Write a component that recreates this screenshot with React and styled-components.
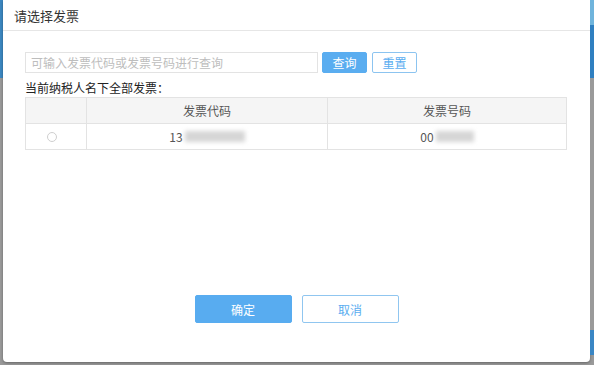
import React from "react";
import styled, { createGlobalStyle } from "styled-components";

const Global = createGlobalStyle`
  html, body { margin: 0; padding: 0; background: #8f8f8f; }
  body { font-family: "Noto Sans CJK SC", "Noto Sans", sans-serif; }
  * { box-sizing: border-box; }
`;

const Page = styled.div`
  width: 594px;
  height: 365px;
  display: flex;
  overflow: hidden;
  background: #9a9a9a;
`;

const Strip = styled.div`
  width: ${(p) => p.$w}px;
  display: flex;
  flex-direction: column;
  flex-shrink: 0;
`;

const Block = styled.div`
  height: ${(p) => p.$h}px;
  background: ${(p) => p.$c};
  flex-shrink: 0;
`;

const Dialog = styled.div`
  width: 587px;
  height: 362px;
  background: #fff;
  border-radius: 0 0 4px 4px;
  box-shadow: 0 1px 3px rgba(0, 0, 0, 0.35);
  display: flex;
  flex-direction: column;
  flex-shrink: 0;
`;

const Header = styled.div`
  height: 31px;
  border-bottom: 1px solid #e6e6e6;
  display: flex;
  align-items: center;
  padding-left: 11px;
  font-size: 13px;
  color: #333;
`;

const Body = styled.div`
  padding: 21px 22px 0 22px;
  display: flex;
  flex-direction: column;
  flex: 1;
`;

const SearchRow = styled.div`
  display: flex;
  align-items: center;
  gap: 4px;
`;

const Input = styled.input`
  width: 293px;
  height: 21px;
  border: 1px solid #e3e3e3;
  padding: 0 5px;
  font-family: inherit;
  font-size: 12px;
  color: #333;
  outline: none;
  &::placeholder { color: #bdbdbd; }
`;

const SmallButton = styled.button`
  height: 21px;
  width: 45px;
  font-family: inherit;
  font-size: 12px;
  border-radius: 2px;
  padding: 0;
  margin-left: ${(p) => p.$ml || 0}px;
  border: 1px solid ${(p) => (p.$primary ? "#5aadf0" : "#8cc4f0")};
  background: ${(p) => (p.$primary ? "#5aadf0" : "#fff")};
  color: ${(p) => (p.$primary ? "#fff" : "#5aadf0")};
`;

const Label = styled.div`
  margin-top: 6px;
  font-size: 12px;
  color: #222;
  line-height: 18px;
`;

const Table = styled.div`
  width: 542px;
  border: 1px solid #e3e3e3;
  display: grid;
  grid-template-columns: 60px 241px 1fr;
  font-size: 12px;
  color: #555;
`;

const Cell = styled.div`
  height: ${(p) => (p.$head ? 26 : 25)}px;
  display: flex;
  align-items: center;
  justify-content: center;
  background: ${(p) => (p.$head ? "#f5f5f5" : "#fff")};
  border-left: ${(p) => (p.$first ? "none" : "1px solid #e3e3e3")};
  border-bottom: ${(p) => (p.$head ? "1px solid #e3e3e3" : "none")};
`;

const Radio = styled.span`
  width: 10px;
  height: 10px;
  border: 1px solid #cfcfcf;
  border-radius: 50%;
  display: inline-block;
  margin-right: 8px;
`;

const Blur = styled.span`
  display: inline-block;
  width: ${(p) => p.$w}px;
  height: 11px;
  background: #d6d6d6;
  filter: blur(2px);
  margin-left: 2px;
`;

const Footer = styled.div`
  display: flex;
  justify-content: center;
  gap: 10px;
  padding-bottom: 39px;
  margin-top: auto;
`;

const BigButton = styled.button`
  width: 97px;
  height: 28px;
  font-family: inherit;
  font-size: 12px;
  border-radius: 2px;
  padding: 0;
  border: 1px solid ${(p) => (p.$primary ? "#58acf0" : "#90c6f0")};
  background: ${(p) => (p.$primary ? "#58acf0" : "#fff")};
  color: ${(p) => (p.$primary ? "#fff" : "#5aadf0")};
`;

export default function App() {
  return (
    <>
      <Global />
      <Page>
        <Strip $w={3}>
          <Block $h={78} $c="#3c88c2" />
        </Strip>
        <Dialog>
          <Header>请选择发票</Header>
          <Body>
            <SearchRow>
              <Input placeholder="可输入发票代码或发票号码进行查询" />
              <SmallButton $primary>查询</SmallButton>
              <SmallButton $ml={1}>重置</SmallButton>
            </SearchRow>
            <Label>当前纳税人名下全部发票：</Label>
            <Table>
              <Cell $head $first />
              <Cell $head>发票代码</Cell>
              <Cell $head>发票号码</Cell>
              <Cell $first>
                <Radio />
              </Cell>
              <Cell>
                13<Blur $w={60} />
              </Cell>
              <Cell>
                00<Blur $w={38} />
              </Cell>
            </Table>
          </Body>
          <Footer>
            <BigButton $primary>确定</BigButton>
            <BigButton>取消</BigButton>
          </Footer>
        </Dialog>
        <Strip $w={4}>
          <Block $h={25} $c="#6fb4dc" />
          <Block $h={53} $c="#2f7fc0" />
          <Block $h={252} $c="#9a9a9a" />
          <Block $h={25} $c="#3a86c4" />
        </Strip>
      </Page>
    </>
  );
}
